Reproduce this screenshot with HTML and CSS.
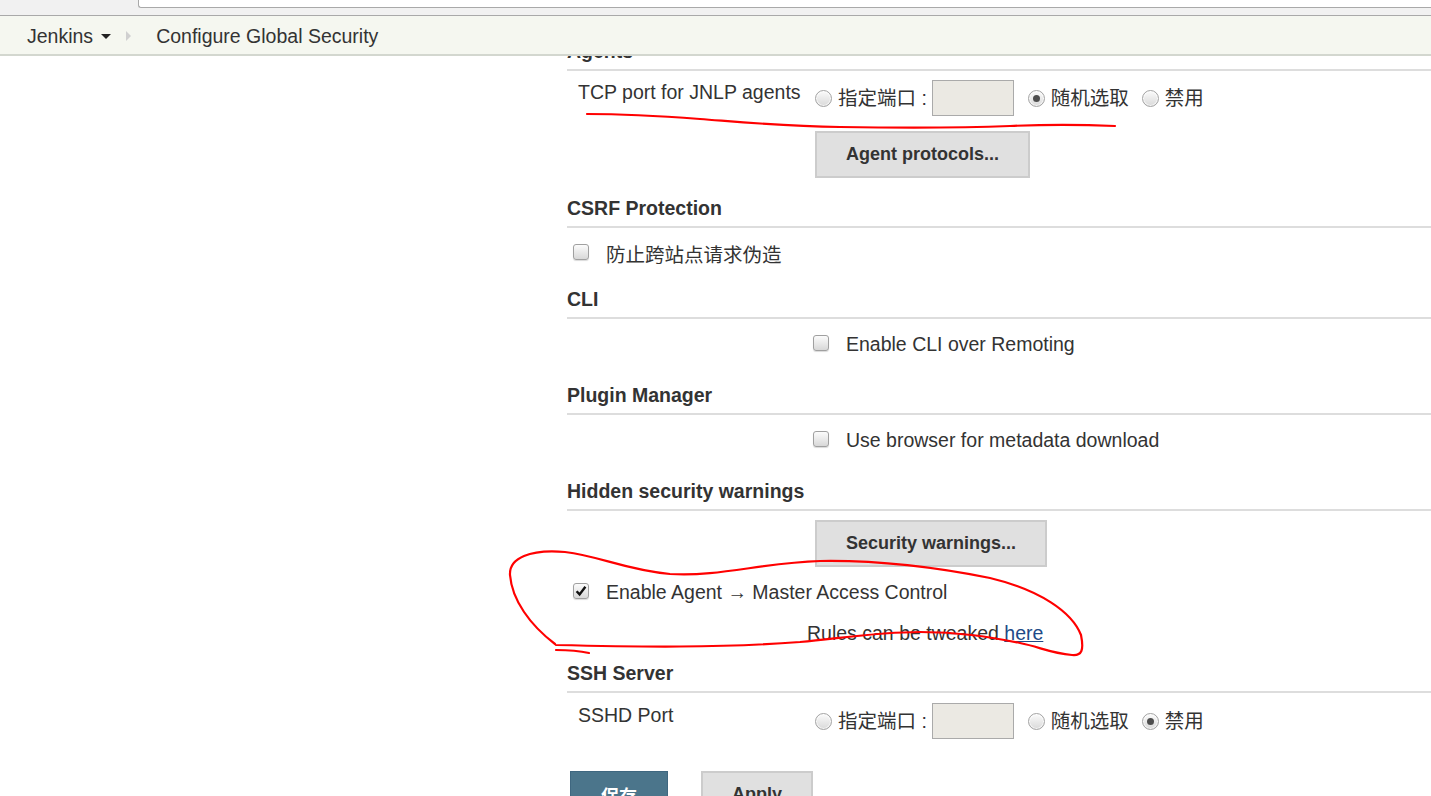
FILE: index.html
```html
<!DOCTYPE html>
<html lang="zh-CN">
<head>
  <meta charset="UTF-8" />
  <meta name="viewport" content="width=device-width, initial-scale=1" />
  <title>Configure Global Security [Jenkins]</title>
  <link rel="stylesheet" href="styles.css">
</head>
<body>
  <!-- strip of the browser window above the page -->
  <div class="chrome"><div class="address"></div></div>

  <nav class="breadcrumbs">
    <span class="crumb">Jenkins</span>
    <span class="caret"></span>
    <span class="sep"></span>
    <span class="crumb">Configure Global Security</span>
  </nav>

  <main class="main">
    <section class="section">
      <h2 class="section-header section-header--first">Agents</h2>
      <div class="setting port-row">
        <div class="setting-name">TCP port for JNLP agents</div>
        <div class="setting-main">
          <label class="radio"><span class="dot"></span>指定端口 :</label>
          <input class="port-input" type="text" disabled>
          <label class="radio radio--gap"><span class="dot dot--on"></span>随机选取</label>
          <label class="radio radio--gap2"><span class="dot"></span>禁用</label>
        </div>
      </div>
      <div class="button-row button-row--agents">
        <button class="btn">Agent protocols...</button>
      </div>
    </section>

    <section class="section">
      <h2 class="section-header section-header--csrf">CSRF Protection</h2>
      <label class="option option--wide"><span class="box"></span>防止跨站点请求伪造</label>
    </section>

    <section class="section">
      <h2 class="section-header section-header--cli">CLI</h2>
      <label class="option"><span class="box"></span>Enable CLI over Remoting</label>
    </section>

    <section class="section">
      <h2 class="section-header">Plugin Manager</h2>
      <label class="option"><span class="box"></span>Use browser for metadata download</label>
    </section>

    <section class="section">
      <h2 class="section-header">Hidden security warnings</h2>
      <div class="button-row button-row--warnings">
        <button class="btn">Security warnings...</button>
      </div>
      <label class="option option--wide option--after-button">
        <span class="box box--checked">
          <svg viewBox="0 0 16 16" width="16" height="16"><path d="M3.6 8.2 L6.6 11.4 L12.4 3.8" fill="none" stroke="#111" stroke-width="2.4"/></svg>
        </span>Enable Agent → Master Access Control
      </label>
      <div class="rules">Rules can be tweaked <a href="#">here</a></div>
    </section>

    <section class="section">
      <h2 class="section-header section-header--ssh">SSH Server</h2>
      <div class="setting port-row port-row--ssh">
        <div class="setting-name">SSHD Port</div>
        <div class="setting-main">
          <label class="radio"><span class="dot"></span>指定端口 :</label>
          <input class="port-input" type="text" disabled>
          <label class="radio radio--gap"><span class="dot"></span>随机选取</label>
          <label class="radio radio--gap2"><span class="dot dot--on"></span>禁用</label>
        </div>
      </div>
    </section>

    <div class="form-buttons">
      <button class="btn btn--primary">保存</button>
      <button class="btn">Apply</button>
    </div>
  </main>

  <!-- red pen marks drawn over the screenshot -->
  <svg class="marks" width="1431" height="796" viewBox="0 0 1431 796">
    <path d="M587 114 C 620 114, 660 116, 700 119 S 780 126, 840 127 S 960 128, 1010 126 S 1090 125, 1115 126" />
    <path d="M555 644 C 530 625, 512 600, 510 575 C 509 558, 530 549, 565 552 C 600 556, 625 570, 670 574 C 720 577, 760 563, 820 561 C 880 560, 940 568, 990 578 C 1040 590, 1072 612, 1081 635 C 1084 650, 1082 656, 1072 655 C 1050 653, 1040 647, 1020 643 C 990 637, 960 632, 920 632 C 880 632, 850 637, 800 642 C 720 648, 640 647, 556 645" />
    <path d="M556 650 C 570 650, 580 651, 589 653" />
  </svg>
</body>
</html>
```

FILE: styles.css
```css
:root {
  --text: #333;
  --rule: #ddd;
  --button-bg: #e0e0e0;
  --button-border: #ccc;
}

body {
  margin: 0;
  font-family: "Liberation Sans", Arial, "Noto Sans CJK SC", sans-serif;
  font-size: 19.5px;
  color: var(--text);
  background: #fff;
  overflow: hidden;
  position: relative;
}

/* browser chrome */
.chrome {
  height: 15px;
  background: #f1f1f1;
  border-bottom: 1px solid #a9a9a9;
}

.address {
  margin-left: 138px;
  height: 7px;
  background: #fff;
  border: 1px solid #a9a9a9;
  border-top: none;
  border-right: none;
  border-bottom-left-radius: 3px;
}

/* breadcrumb bar */
.breadcrumbs {
  position: relative;
  z-index: 2;
  height: 38px;
  display: flex;
  align-items: center;
  padding-left: 27px;
  background: #f5f7f0;
  border-bottom: 2px solid #d3d7cf;
}

.crumb {
  line-height: 24px;
  margin-top: 1px;
}

.caret {
  width: 0;
  height: 0;
  margin-left: 8px;
  margin-top: 3px;
  border-left: 5px solid transparent;
  border-right: 5px solid transparent;
  border-top: 5px solid #222;
}

.sep {
  width: 0;
  height: 0;
  margin: 2px 25px 0 15px;
  border-top: 5px solid transparent;
  border-bottom: 5px solid transparent;
  border-left: 5px solid #d0d0d0;
}

/* form */
.main {
  position: relative;
  z-index: 1;
  margin-top: -17px;
  padding-left: 567px;
}

.section-header {
  margin: 26px 0 0;
  font-size: 19.5px;
  font-weight: bold;
  line-height: 24px;
  padding-bottom: 6px;
  border-bottom: 2px solid var(--rule);
}

.section-header--first { margin-top: 0; }
.section-header--csrf { margin-top: 18px; }
.section-header--cli { margin-top: 21px; }
.section-header--ssh { margin-top: 15px; }

.setting {
  display: grid;
  grid-template-columns: 246px 1fr;
}

.setting-name {
  padding-left: 11px;
  line-height: 24px;
}

.setting-main {
  display: flex;
  align-items: center;
  height: 36px;
}

.port-row { margin-top: 9px; }
.port-row--ssh { margin-top: 10px; }

.radio {
  display: flex;
  align-items: center;
  margin-left: 2px;
  line-height: 24px;
}

.radio--gap { margin-left: 14px; }
.radio--gap2 { margin-left: 13px; }

.dot {
  box-sizing: border-box;
  width: 17px;
  height: 17px;
  margin-right: 6px;
  border: 1px solid #a3a3a3;
  border-radius: 50%;
  background: linear-gradient(#fbfbfb, #d9d9d9);
  box-shadow: inset 0 0 0 1px rgba(255, 255, 255, 0.7);
  position: relative;
}

.dot--on::after {
  content: "";
  position: absolute;
  left: 4px;
  top: 4px;
  width: 7px;
  height: 7px;
  border-radius: 50%;
  background: #4d4d4d;
}

.port-input {
  box-sizing: border-box;
  width: 82px;
  height: 36px;
  margin: 0 0 0 5px;
  padding: 0;
  background: #ebe9e3;
  border: 1px solid #aaa;
}

.button-row { padding-left: 248px; }
.button-row--agents { margin-top: 15px; }
.button-row--warnings { margin-top: 9px; }

.btn {
  box-sizing: border-box;
  height: 47px;
  padding: 0 29px;
  font-family: inherit;
  font-size: 18px;
  font-weight: bold;
  color: var(--text);
  background: var(--button-bg);
  border: 2px solid var(--button-border);
  border-radius: 0;
}

.option {
  display: flex;
  align-items: center;
  height: 26px;
  margin-top: 12px;
  padding-left: 246px;
}

.option--wide { padding-left: 6px; }
.option--after-button { margin-top: 12px; }

.box {
  box-sizing: border-box;
  width: 16px;
  height: 16px;
  margin-right: 17px;
  margin-top: -2px;
  border: 1px solid #a0a0a0;
  border-radius: 3px;
  background: linear-gradient(#fcfcfc, #d8d8d8);
  box-shadow: 0 1px 1px rgba(0, 0, 0, 0.15);
  display: flex;
  align-items: center;
  justify-content: center;
}

.box svg {
  display: block;
  margin: -1px;
}

.rules {
  margin-top: 15px;
  padding-left: 240px;
  line-height: 26px;
}

.rules a {
  color: #204a87;
  text-decoration: underline;
}

.form-buttons {
  display: flex;
  gap: 33px;
  margin-top: 32px;
  padding-left: 3px;
}

.btn--primary {
  width: 98px;
  padding: 0;
  color: #fff;
  background: #4b758b;
  border: 1px solid #3f6780;
}

.form-buttons .btn:not(.btn--primary) {
  width: 112px;
  padding: 0;
}

/* annotations */
.marks {
  position: absolute;
  top: 0;
  left: 0;
  z-index: 5;
  pointer-events: none;
}

.marks path {
  fill: none;
  stroke: #f00;
  stroke-width: 2.2;
  stroke-linecap: round;
}
```
